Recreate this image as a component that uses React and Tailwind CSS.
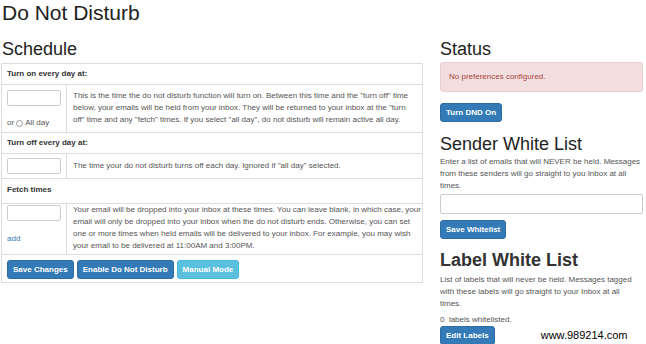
export default function App() {
  const btn = "rounded-[3px] bg-[#337ab7] border border-[#2e6da4] text-white font-bold text-[8px] leading-[10px] px-[5px] py-[4px]";
  return (
    <div className="w-[646px] h-[344px] bg-white overflow-hidden relative text-[#333]" style={{ fontFamily: '"Liberation Sans", Arial, sans-serif' }}>
      <h1 className="text-[21px] leading-[23px] pl-[2px] pt-[1px] text-[#222]">Do Not Disturb</h1>
      <div className="flex">
        <div className="w-[422px] ml-[1px] shrink-0">
          <h2 className="text-[18px] leading-[19px] mt-[16px] pl-[1px] text-[#222]">Schedule</h2>
          <div className="mt-[4px] border border-[#ddd] text-[8px] leading-[12px]">
            <div className="font-bold px-[5px] py-[4px] h-[21px] border-b border-[#ddd]">Turn on every day at:</div>
            <div className="flex h-[48px] border-b border-[#ddd]">
              <div className="w-[65px] shrink-0 border-r border-[#ddd] px-[5px] pt-[5px] flex flex-col justify-between pb-[3px]">
                <div className="w-[54px] h-[16px] border border-[#ccc] rounded-[2px]"></div>
                <div className="flex items-center text-[#555]">or <span className="inline-block w-[7px] h-[7px] rounded-full border border-[#999] mx-[2px]"></span> All day</div>
              </div>
              <div className="px-[6px] pt-[5px] text-[#555] whitespace-nowrap">
                This is the time the do not disturb function will turn on. Between this time and the "turn off" time<br />
                below, your emails will be held from your inbox. They will be returned to your inbox at the "turn<br />
                off" time and any "fetch" times. If you select "all day", do not disturb will remain active all day.
              </div>
            </div>
            <div className="font-bold px-[5px] py-[4px] h-[21px] border-b border-[#ddd]">Turn off every day at:</div>
            <div className="flex h-[25px] border-b border-[#ddd]">
              <div className="w-[65px] shrink-0 border-r border-[#ddd] px-[5px] pt-[4px]">
                <div className="w-[54px] h-[16px] border border-[#ccc] rounded-[2px]"></div>
              </div>
              <div className="px-[6px] pt-[6px] text-[#555]">The time your do not disturb turns off each day. Ignored if "all day" selected.</div>
            </div>
            <div className="font-bold px-[5px] py-[5px] h-[25px] border-b border-[#ddd]">Fetch times</div>
            <div className="flex h-[51px] border-b border-[#ddd]">
              <div className="w-[65px] shrink-0 border-r border-[#ddd] px-[5px] pt-[1px] flex flex-col justify-between pb-[9px]">
                <div className="w-[54px] h-[16px] border border-[#ccc] rounded-[2px]"></div>
                <div className="text-[#337ab7]">add</div>
              </div>
              <div className="px-[6px] pt-0 text-[#555] whitespace-nowrap">
                Your email will be dropped into your inbox at these times. You can leave blank, in which case, your<br />
                email will only be dropped into your inbox when the do not disturb ends. Otherwise, you can set<br />
                one or more times when held emails will be delivered to your inbox. For example, you may wish<br />
                your email to be delivered at 11:00AM and 3:00PM.
              </div>
            </div>
            <div className="flex gap-[3px] px-[5px] pt-[5px] pb-[3px] h-[27px]">
              <button className={btn}>Save Changes</button>
              <button className={btn}>Enable Do Not Disturb</button>
              <button className="rounded-[3px] bg-[#5bc0de] border border-[#46b8da] text-white font-bold text-[8px] leading-[10px] px-[5px] py-[4px]">Manual Mode</button>
            </div>
          </div>
        </div>
        <div className="w-[203px] ml-[17px] shrink-0">
          <h2 className="text-[18px] leading-[19px] mt-[16px] text-[#222]">Status</h2>
          <div className="mt-[3px] h-[30px] rounded-[3px] bg-[#f2dede] border border-[#ebccd1] text-[#a94442] text-[8px] flex items-center pl-[8px]">No preferences configured.</div>
          <button className={btn + " mt-[11px] h-[19px]"}>Turn DND On</button>
          <h2 className="text-[18px] leading-[19px] mt-[13px] text-[#222]">Sender White List</h2>
          <p className="text-[8px] leading-[12px] text-[#555] mt-[2px]">Enter a list of emails that will NEVER be held. Messages from these senders will go straight to you Inbox at all times.</p>
          <div className="mt-[2px] h-[20px] border border-[#ccc] rounded-[2px]"></div>
          <button className={btn + " mt-[6px] h-[19px]"}>Save Whitelist</button>
          <h2 className="text-[18px] leading-[19px] mt-[12px] font-bold text-[#333]">Label White List</h2>
          <p className="text-[8px] leading-[12px] text-[#555] mt-[4px]">List of labels that will never be held. Messages tagged with these labels will go straight to your Inbox at all times.</p>
          <p className="text-[8px] leading-[12px] text-[#555] mt-[4px]">0&nbsp; labels whitelisted.</p>
          <div className="flex items-end">
            <button className={btn + " h-[19px]"}>Edit Labels</button>
            <span className="ml-[46px] mb-[4px] text-[11px] leading-[12px] text-black">www.989214.com</span>
          </div>
        </div>
      </div>
    </div>
  );
}
